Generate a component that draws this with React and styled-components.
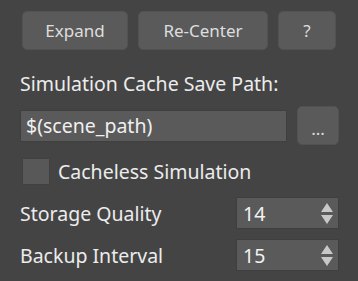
import React from 'react';
import styled, { createGlobalStyle } from 'styled-components';

const Global = createGlobalStyle`
	html, body {
		margin: 0;
		padding: 0;
		background: #444444;
	}
	body {
		font-family: "Noto Sans", "Open Sans", sans-serif;
		color: #ececec;
	}
`;

const Panel = styled.div`
	width: 358px;
	height: 281px;
	box-sizing: border-box;
	padding: 11px 19px 0 20px;
	display: flex;
	flex-direction: column;
`;

const ButtonRow = styled.div`
	display: flex;
	gap: 10px;
	padding-left: 2px;
`;

const Button = styled.button`
	width: ${p => p.w}px;
	height: 39px;
	box-sizing: border-box;
	background: #5a5a5a;
	border: 1px solid #525252;
	border-radius: 5px;
	color: #dedede;
	font-family: inherit;
	font-size: 17px;
	padding: 0;
	display: flex;
	align-items: center;
	justify-content: center;
`;

const Label = styled.div`
	font-size: 19.5px;
	line-height: 24px;
	margin-top: ${p => p.mt || 0}px;
	white-space: nowrap;
`;

const PathRow = styled.div`
	display: flex;
	align-items: center;
	gap: 10px;
	margin-top: 10px;
`;

const PathInput = styled.div`
	width: 267px;
	height: 32px;
	box-sizing: border-box;
	background: #5a5a5a;
	border: 1px solid #3f3f3f;
	display: flex;
	align-items: center;
	padding-left: 5px;
	font-size: 19.5px;
	color: #f0f0f0;
`;

const Dots = styled.span`
	font-size: 17px;
	margin-top: 6px;
`;

const CheckRow = styled.label`
	display: flex;
	align-items: center;
	gap: 8px;
	height: 27px;
	margin-top: 13px;
	padding-left: 2px;
	font-size: 19.5px;
`;

const Box = styled.span`
	width: 28px;
	height: 27px;
	box-sizing: border-box;
	background: #585858;
	border: 1px solid #404040;
`;

const SpinRow = styled.div`
	display: flex;
	align-items: center;
	justify-content: space-between;
	height: 32px;
	margin-top: ${p => p.mt}px;
	font-size: 19.5px;
`;

const Spinner = styled.div`
	width: 103px;
	height: 32px;
	box-sizing: border-box;
	background: #5a5a5a;
	border: 1px solid #3f3f3f;
	display: flex;
	align-items: center;
	justify-content: space-between;
	padding: 0 5px 0 6px;
	color: #f2f2f2;
`;

const Arrows = () => (
	<svg width="12" height="21" viewBox="0 0 12 21">
		<polygon points="6,0 12,9 0,9" fill="#c8c8c8" />
		<polygon points="0,12 12,12 6,21" fill="#c8c8c8" />
	</svg>
);

export default function App() {
	return (
		<>
			<Global />
			<Panel>
				<ButtonRow>
					<Button w={106}>Expand</Button>
					<Button w={130}>Re-Center</Button>
					<Button w={58}>?</Button>
				</ButtonRow>

				<Label mt={22}>Simulation Cache Save Path:</Label>

				<PathRow>
					<PathInput>$(scene_path)</PathInput>
					<Button w={42}><Dots>...</Dots></Button>
				</PathRow>

				<CheckRow>
					<Box />
					Cacheless Simulation
				</CheckRow>

				<SpinRow mt={12}>
					<span>Storage Quality</span>
					<Spinner>14<Arrows /></Spinner>
				</SpinRow>
				<SpinRow mt={10}>
					<span>Backup Interval</span>
					<Spinner>15<Arrows /></Spinner>
				</SpinRow>
			</Panel>
		</>
	);
}
